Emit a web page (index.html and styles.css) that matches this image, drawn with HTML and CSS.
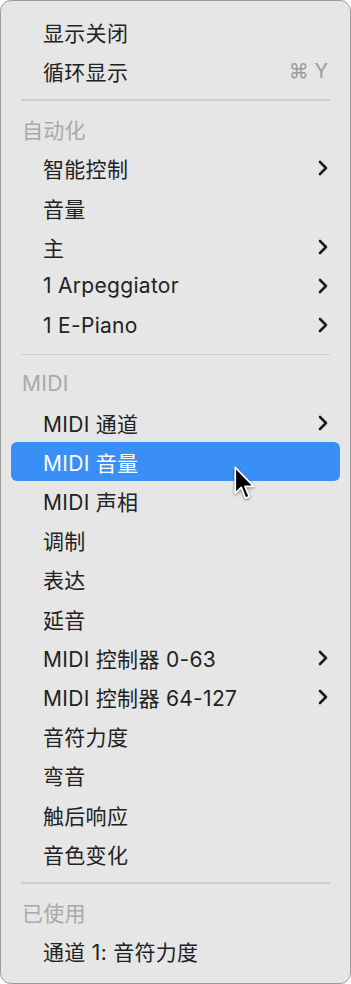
FILE: index.html
```html
<!DOCTYPE html>
<html lang="zh-CN">
<head>
<meta charset="utf-8">
<title>Menu</title>
<link rel="stylesheet" href="styles.css">
</head>
<body>
<div class="menu">
  <div class="item"><span class="label">显示关闭</span></div>
  <div class="item"><span class="label">循环显示</span><span class="shortcut">⌘ Y</span></div>
  <div class="sep"></div>
  <div class="header">自动化</div>
  <div class="item"><span class="label">智能控制</span><svg class="chev" viewBox="0 0 10 16"><path d="M2 2 L8 8 L2 14"/></svg></div>
  <div class="item"><span class="label">音量</span></div>
  <div class="item"><span class="label">主</span><svg class="chev" viewBox="0 0 10 16"><path d="M2 2 L8 8 L2 14"/></svg></div>
  <div class="item"><span class="label">1 Arpeggiator</span><svg class="chev" viewBox="0 0 10 16"><path d="M2 2 L8 8 L2 14"/></svg></div>
  <div class="item"><span class="label">1 E-Piano</span><svg class="chev" viewBox="0 0 10 16"><path d="M2 2 L8 8 L2 14"/></svg></div>
  <div class="sep"></div>
  <div class="header">MIDI</div>
  <div class="item"><span class="label">MIDI 通道</span><svg class="chev" viewBox="0 0 10 16"><path d="M2 2 L8 8 L2 14"/></svg></div>
  <div class="item selected"><span class="label">MIDI 音量</span>
    <svg class="cursor" viewBox="0 0 24 34"><path d="M3 3 L3 27 L8.5 21.5 L12.5 31.5 L16 30 L12 20.5 L20 20.5 Z"/></svg>
  </div>
  <div class="item"><span class="label">MIDI 声相</span></div>
  <div class="item"><span class="label">调制</span></div>
  <div class="item"><span class="label">表达</span></div>
  <div class="item"><span class="label">延音</span></div>
  <div class="item"><span class="label">MIDI 控制器 0-63</span><svg class="chev" viewBox="0 0 10 16"><path d="M2 2 L8 8 L2 14"/></svg></div>
  <div class="item"><span class="label">MIDI 控制器 64-127</span><svg class="chev" viewBox="0 0 10 16"><path d="M2 2 L8 8 L2 14"/></svg></div>
  <div class="item"><span class="label">音符力度</span></div>
  <div class="item"><span class="label">弯音</span></div>
  <div class="item"><span class="label">触后响应</span></div>
  <div class="item"><span class="label">音色变化</span></div>
  <div class="sep"></div>
  <div class="header">已使用</div>
  <div class="item"><span class="label">通道 1: 音符力度</span></div>
</div>
</body>
</html>
```
FILE: styles.css
```css
html, body {
  margin: 0;
  padding: 0;
  background: #ffffff;
}
body {
  width: 351px;
  height: 984px;
  overflow: hidden;
  font-family: Inter, "Noto Sans CJK SC", sans-serif;
}
.menu {
  box-sizing: border-box;
  width: 351px;
  height: 984px;
  background: #e6e6e6;
  border: 1.5px solid #9c9c9c;
  border-radius: 11px;
  padding: 11px 10px 0 10px;
  display: flex;
  flex-direction: column;
}
.item, .header {
  position: relative;
  height: 39.2px;
  flex: none;
  display: flex;
  align-items: center;
  font-size: 21px;
  letter-spacing: 0.3px;
  color: #222222;
  border-radius: 6px;
}
.item {
  padding: 0 12px 0 32px;
}
.header {
  padding-left: 11px;
  color: #a9a9a9;
}
.label {
  flex: 1;
  white-space: nowrap;
}
.shortcut {
  color: #9d9d9d;
  font-size: 20px;
  letter-spacing: 0;
}
.chev {
  width: 10px;
  height: 16px;
  fill: none;
  stroke: #1c1c1c;
  stroke-width: 2.6;
  stroke-linecap: round;
  stroke-linejoin: round;
}
.sep {
  height: 19.2px;
  flex: none;
  display: flex;
  align-items: center;
  padding: 0 10px;
}
.sep::before {
  content: "";
  display: block;
  width: 100%;
  height: 1.5px;
  background: #cdcdcd;
}
.selected {
  background: #3a8ff6;
  color: #ffffff;
}
.cursor {
  position: absolute;
  left: 221px;
  top: 22px;
  width: 26px;
  height: 37px;
  fill: #000000;
  stroke: #ffffff;
  stroke-width: 1.6;
  stroke-linejoin: round;
  filter: drop-shadow(0 1px 1.5px rgba(0,0,0,0.45));
  z-index: 2;
}
```
